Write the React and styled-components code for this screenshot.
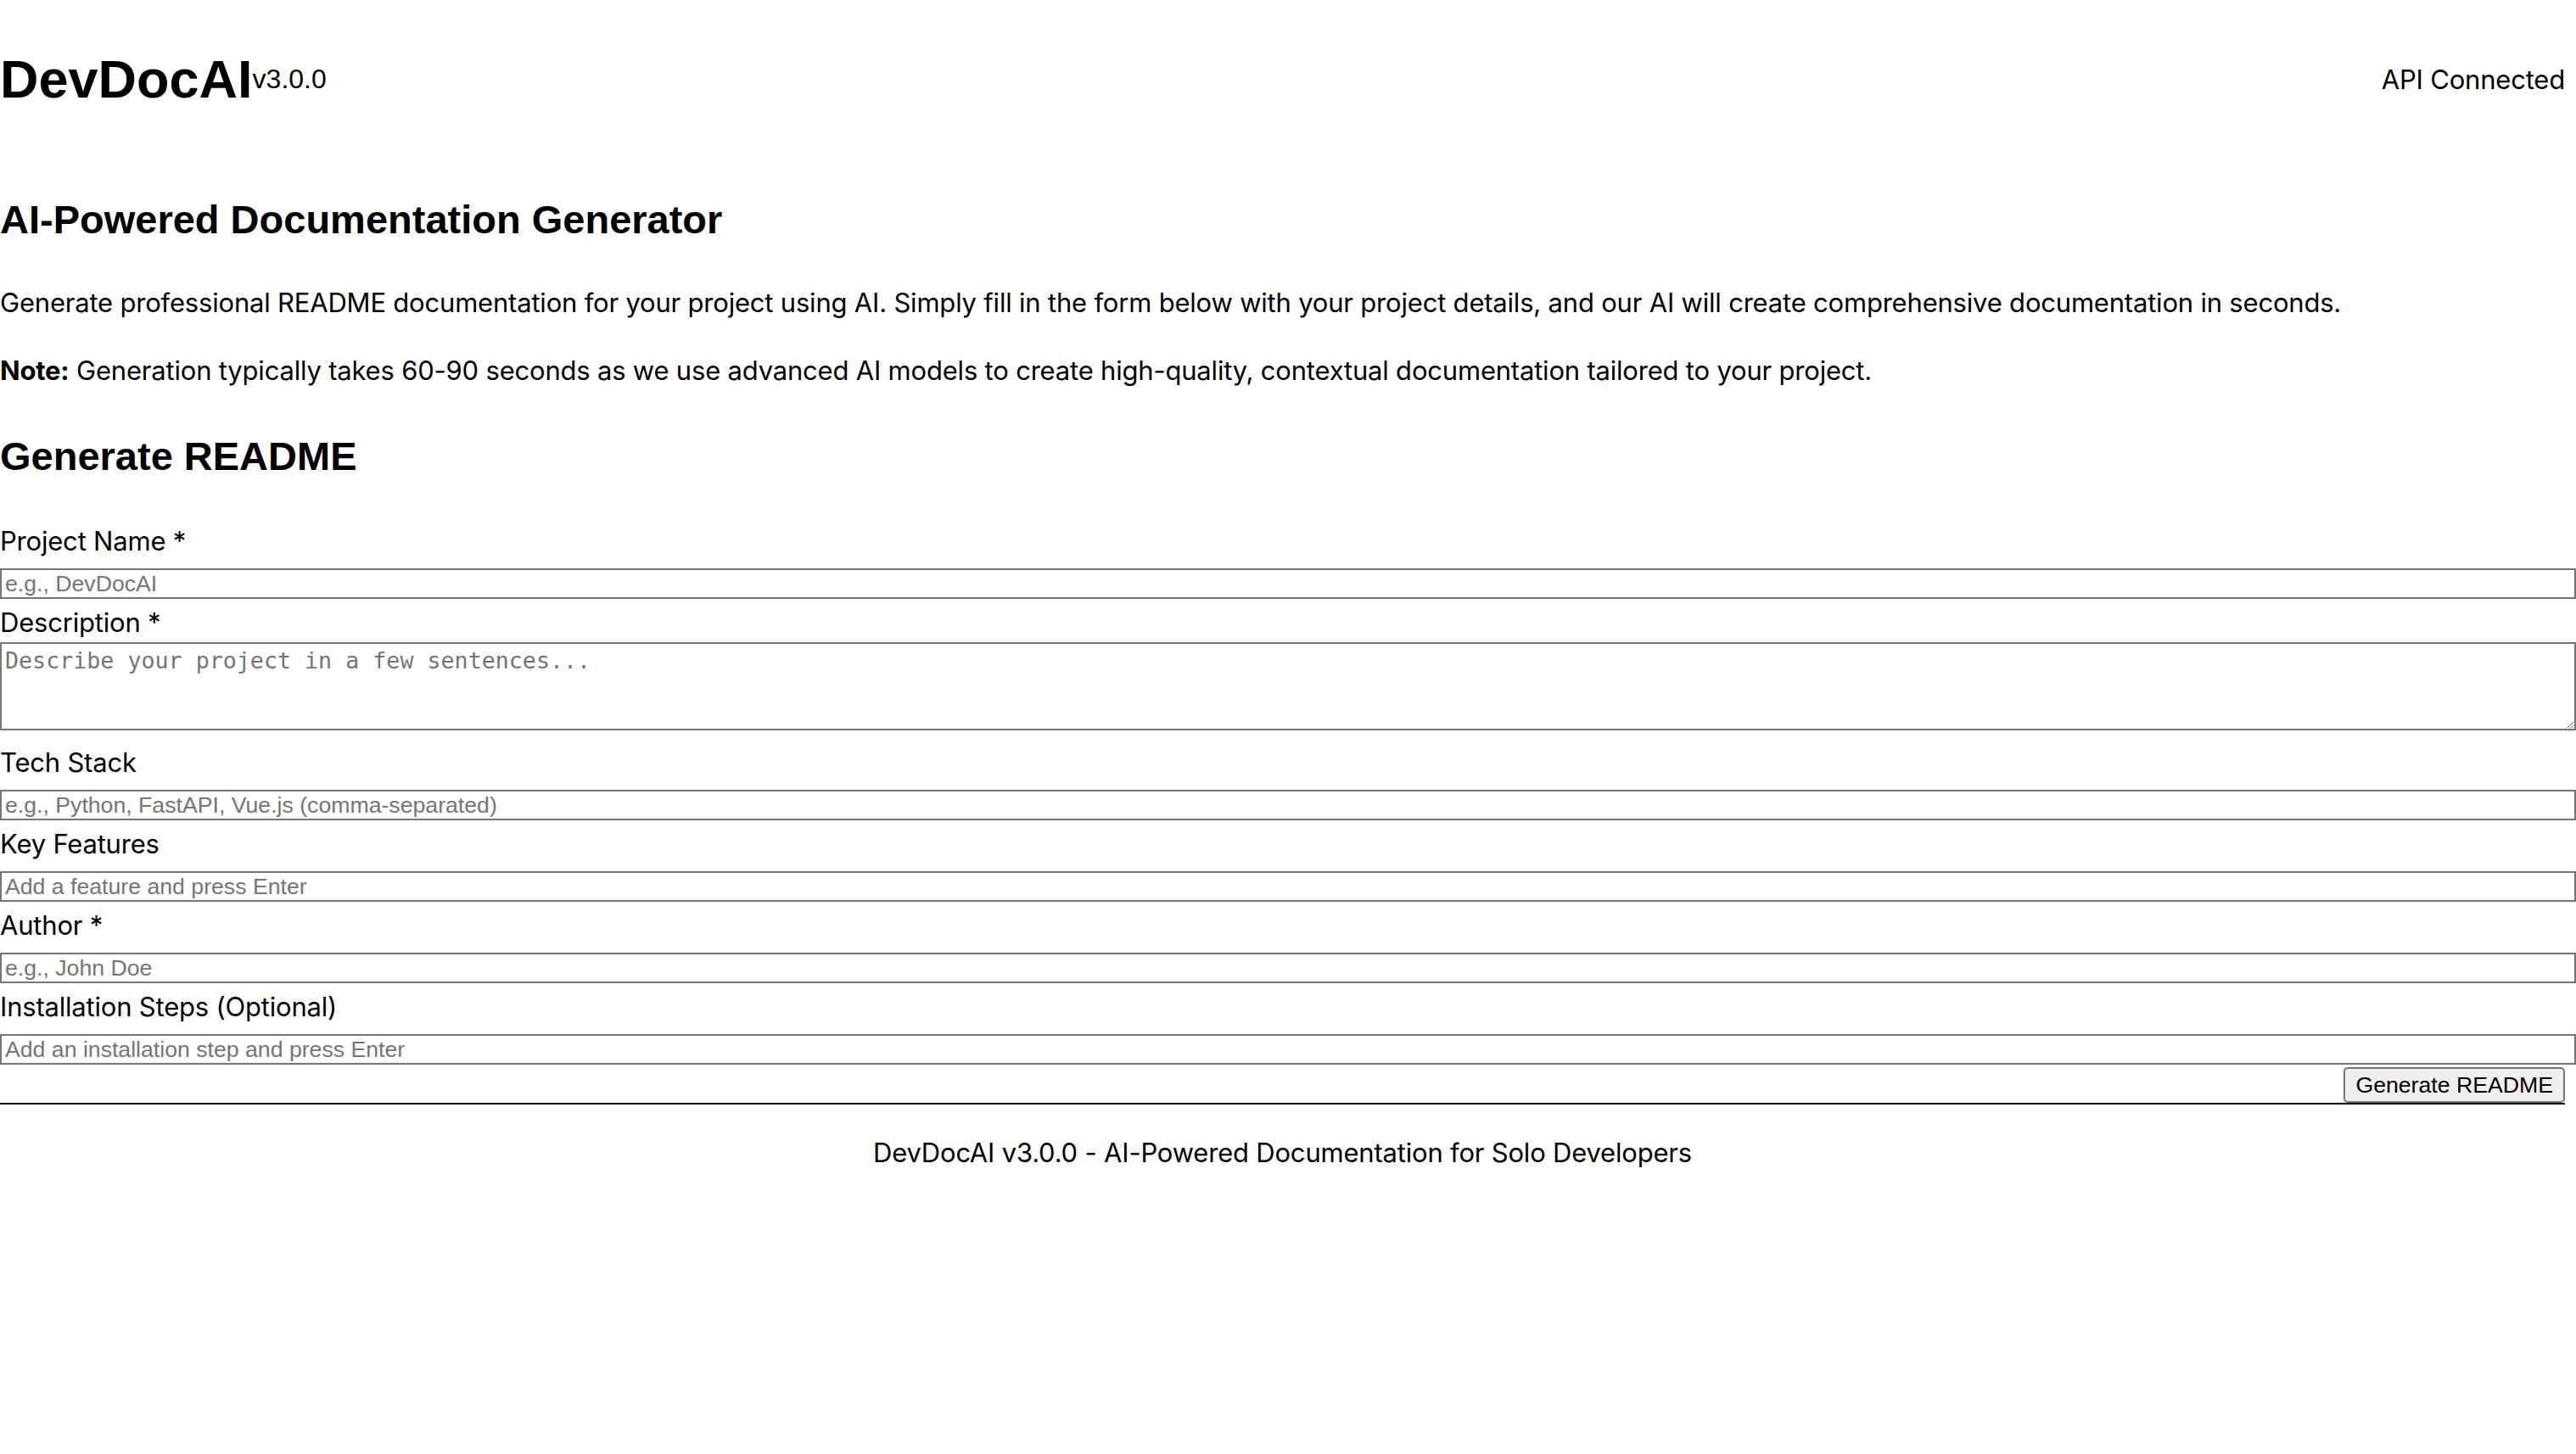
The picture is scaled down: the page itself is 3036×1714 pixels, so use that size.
import React from "react";
import styled, { createGlobalStyle } from "styled-components";

const GlobalStyle = createGlobalStyle`
  html, body {
    margin: 0;
    padding: 0;
    background: #ffffff;
    overflow-x: hidden;
  }
  body {
    font-family: Inter, "Noto Sans", sans-serif;
    color: #000;
  }
`;

const Page = styled.div`
  padding-right: 13px;
  font-family: Inter, "Noto Sans", sans-serif;
  color: #000;
`;

const Header = styled.header`
  display: flex;
  align-items: center;
  justify-content: space-between;
  padding-top: 57px;
`;

const Brand = styled.div`
  display: flex;
  align-items: center;
`;

const Logo = styled.h1`
  margin: 0;
  font-family: "Liberation Sans", Arial, sans-serif;
  font-weight: 700;
  font-size: 63px;
  line-height: 72px;
`;

const Version = styled.span`
  font-family: "Liberation Sans", Arial, sans-serif;
  font-size: 32px;
  line-height: 37px;
`;

const Status = styled.span`
  font-size: 31px;
  line-height: 39px;
  letter-spacing: -0.2px;
`;

const Heading = styled.h2`
  margin: ${(p) => p.$top}px 0 0;
  font-family: "Liberation Sans", Arial, sans-serif;
  font-weight: 700;
  font-size: 47px;
  line-height: 56px;
`;

const Text = styled.p`
  margin: ${(p) => p.$top}px 0 0;
  font-size: 31px;
  line-height: 34px;
  letter-spacing: -0.2px;
  strong {
    font-weight: 700;
  }
`;

const Form = styled.form`
  margin-top: 55px;
  display: flex;
  flex-direction: column;
`;

const Fields = styled.div`
  display: flex;
  flex-direction: column;
  gap: 11px;
`;

const Field = styled.div`
  display: flex;
  flex-direction: column;
`;

const Label = styled.label`
  font-size: 31px;
  line-height: 34px;
  letter-spacing: -0.2px;
  margin-bottom: 15px;
`;

const Input = styled.input`
  box-sizing: border-box;
  width: calc(100% + 13px);
  height: 36px;
  margin: 0;
  padding: 0 4px;
  border: 2px solid #767676;
  border-radius: 0;
  font-family: "Liberation Sans", Arial, sans-serif;
  font-size: 26.67px;
  color: #000;
  background: #fff;
  outline: none;
  &::placeholder {
    color: #757575;
  }
`;

const TextArea = styled.textarea`
  box-sizing: border-box;
  width: calc(100% + 13px);
  height: 104px;
  margin: -9px 0 10px;
  padding: 4px 4px;
  border: 2px solid #767676;
  border-radius: 0;
  font-family: "DejaVu Sans Mono", "Liberation Mono", monospace;
  font-size: 26.67px;
  color: #000;
  background: #fff;
  outline: none;
  &::placeholder {
    color: #757575;
  }
`;

const ButtonRow = styled.div`
  display: flex;
  justify-content: flex-end;
  margin-top: 3px;
`;

const SubmitButton = styled.button`
  box-sizing: border-box;
  height: 42px;
  padding: 0 12px;
  border: 2px solid #767676;
  border-radius: 5px;
  background: #efefef;
  font-family: "Liberation Sans", Arial, sans-serif;
  font-size: 26.67px;
  color: #000;
`;

const Footer = styled.footer`
  border-top: 2px solid #000;
  padding-top: 40px;
  text-align: center;
  font-size: 31px;
  line-height: 34px;
  letter-spacing: -0.2px;
`;

const fields = [
  { id: "name", label: "Project Name *", placeholder: "e.g., DevDocAI" },
  { id: "desc", label: "Description *", placeholder: "Describe your project in a few sentences...", multiline: true },
  { id: "stack", label: "Tech Stack", placeholder: "e.g., Python, FastAPI, Vue.js (comma-separated)" },
  { id: "features", label: "Key Features", placeholder: "Add a feature and press Enter" },
  { id: "author", label: "Author *", placeholder: "e.g., John Doe" },
  { id: "install", label: "Installation Steps (Optional)", placeholder: "Add an installation step and press Enter" },
];

export default function App() {
  return (
    <>
      <GlobalStyle />
      <Page>
        <Header>
          <Brand>
            <Logo>DevDocAI</Logo>
            <Version>v3.0.0</Version>
          </Brand>
          <Status>API Connected</Status>
        </Header>

        <section>
          <Heading $top={102}>AI-Powered Documentation Generator</Heading>
          <Text $top={53}>
            Generate professional README documentation for your project using AI. Simply fill in the form below with your project details, and our AI will create comprehensive documentation in seconds.
          </Text>
          <Text $top={46}>
            <strong>Note:</strong> Generation typically takes 60-90 seconds as we use advanced AI models to create high-quality, contextual documentation tailored to your project.
          </Text>
        </section>

        <section>
          <Heading $top={56}>Generate README</Heading>
          <Form onSubmit={(e) => e.preventDefault()}>
            <Fields>
              {fields.map((f) => (
                <Field key={f.id}>
                  <Label htmlFor={f.id}>{f.label}</Label>
                  {f.multiline ? (
                    <TextArea id={f.id} placeholder={f.placeholder} />
                  ) : (
                    <Input id={f.id} type="text" placeholder={f.placeholder} />
                  )}
                </Field>
              ))}
            </Fields>
            <ButtonRow>
              <SubmitButton type="submit">Generate README</SubmitButton>
            </ButtonRow>
          </Form>
        </section>

        <Footer>DevDocAI v3.0.0 - AI-Powered Documentation for Solo Developers</Footer>
      </Page>
    </>
  );
}
